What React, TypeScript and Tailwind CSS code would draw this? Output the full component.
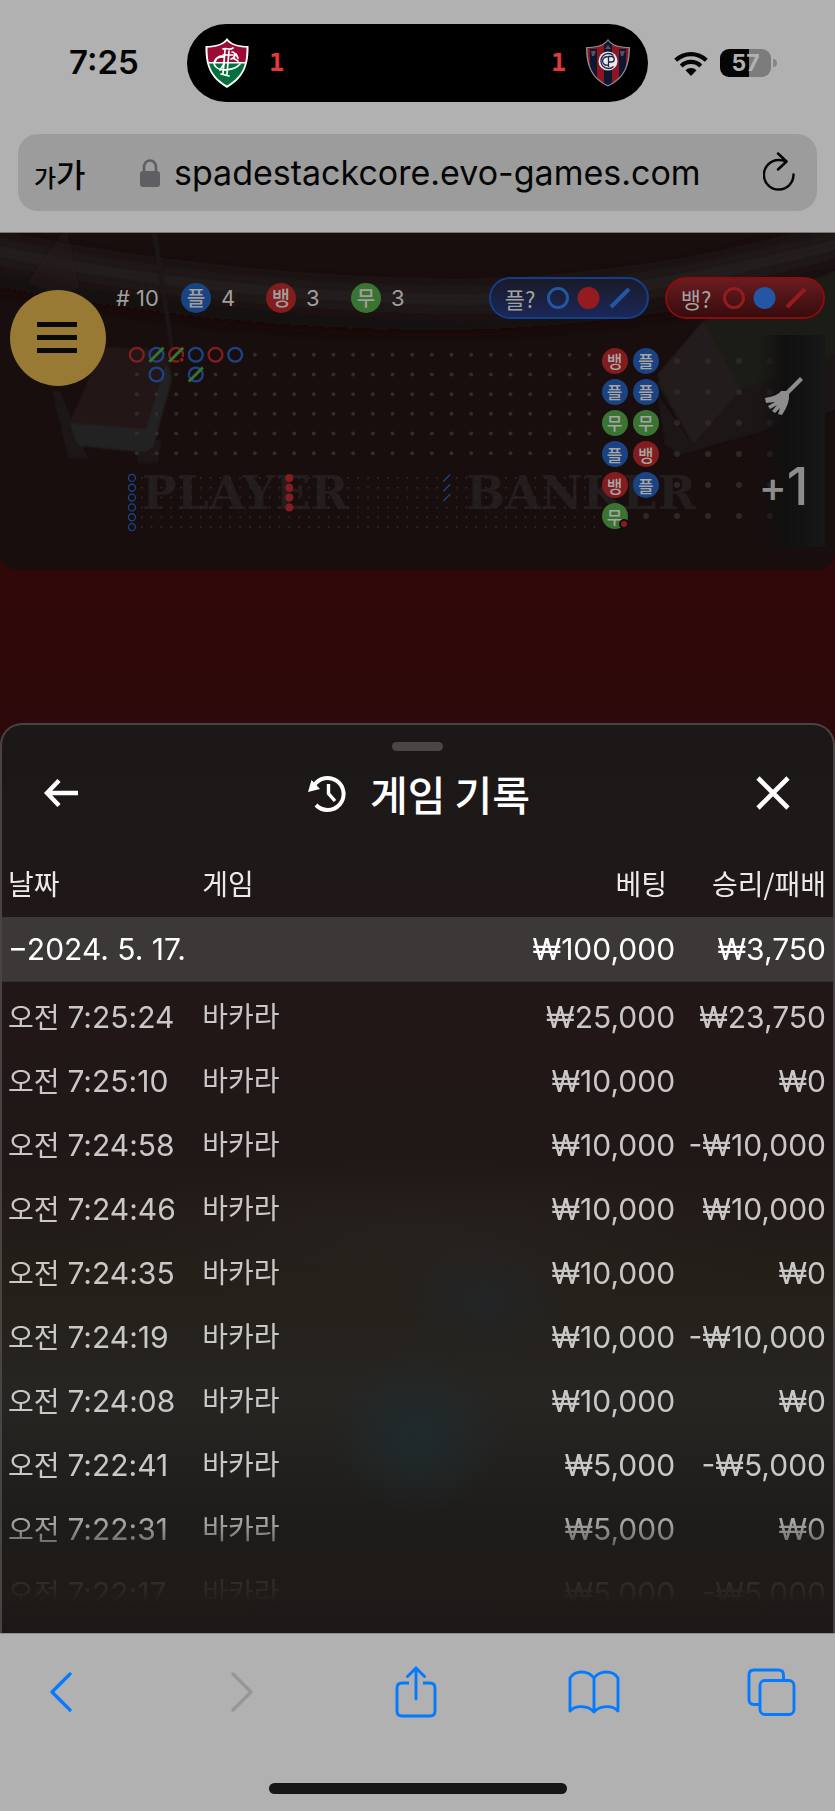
import React from "react";

type Side = "p" | "b" | "t";

const sideLabel: Record<Side, string> = { p: "플", b: "뱅", t: "무" };
const sideBg: Record<Side, string> = {
  p: "bg-[#1a4383]",
  b: "bg-[#831c1e]",
  t: "bg-[#3a7433]",
};

const BLUE = "#1b4488";
const RED = "#841d20";
const GREEN = "#39742f";

const kr = "font-['Noto_Sans_CJK_KR',sans-serif]";

const beads: (Side | null)[][] = [
  ["b", "p", null, null, null, null, null],
  ["p", "p", null, null, null, null, null],
  ["t", "t", null, null, null, null, null],
  ["p", "b", null, null, null, null, null],
  ["b", "p", null, null, null, null, null],
  ["t", null, null, null, null, null, null],
];

const history = [
  ["7:25:24", "₩25,000", "₩23,750"],
  ["7:25:10", "₩10,000", "₩0"],
  ["7:24:58", "₩10,000", "-₩10,000"],
  ["7:24:46", "₩10,000", "₩10,000"],
  ["7:24:35", "₩10,000", "₩0"],
  ["7:24:19", "₩10,000", "-₩10,000"],
  ["7:24:08", "₩10,000", "₩0"],
  ["7:22:41", "₩5,000", "-₩5,000"],
  ["7:22:31", "₩5,000", "₩0"],
  ["7:22:17", "₩5,000", "-₩5,000"],
];

function HomeCrest() {
  return (
    <svg viewBox="0 0 44 50" className="h-[50px] w-11" role="img" aria-label="Home team">
      <defs>
        <clipPath id="homeShield">
          <path d="M22 3C18 7 11 9.500 2.500 9.500C2.500 27 6 38 22 47.500C38 38 41.500 27 41.500 9.500C33 9.500 26 7 22 3Z" />
        </clipPath>
      </defs>
      <path d="M22 0C18 6 11 8 0.500 8C0 27 5 40 22 50C39 40 44 27 43.500 8C33 8 26 6 22 0Z" fill="#fff" />
      <g clipPath="url(#homeShield)">
        <rect width="44" height="25" fill="#9b0b34" />
        <rect y="25" width="44" height="25" fill="#04703f" />
        <rect y="24" width="44" height="1.500" fill="#fff" />
      </g>
      <g fill="none" stroke="#fff" strokeWidth="1.700" strokeLinecap="round">
        <path d="M18 11C21 9 24 13 28 10M20 12L18 36M24 13L22 36M18 17H28M16 36L24 38" />
        <path d="M19 19C10 18 7 25 11 29C16 34 30 32 35 26" />
        <path d="M10 24C12 18 16 17 19 19" />
        <path d="M27 14C31 14 31 20 26 21M28 20L33 23M31 16L33 20M15 32L19 26" />
      </g>
    </svg>
  );
}

function AwayCrest() {
  return (
    <svg viewBox="0 0 44 48" className="h-12 w-11" role="img" aria-label="Away team">
      <defs>
        <clipPath id="awayShield">
          <path d="M22 2C18 7 11 9 1.500 9C1.500 27 7 39 22 46C37 39 42.500 27 42.500 9C33 9 26 7 22 2Z" />
        </clipPath>
      </defs>
      <path d="M22 0C18 6 11 8 0 8C0 28 6 40 22 47.500C38 40 44 28 44 8C33 8 26 6 22 0Z" fill="#8a8a93" />
      <g clipPath="url(#awayShield)">
        <rect width="44" height="48" fill="#8c1620" />
        <path d="M4 10H11V48H4ZM18 0H26V48H18ZM33 10H40V48H33Z" fill="#0f1730" />
        <path d="M5 12H10L8 17H6ZM34 12H39L37 17H35ZM19 10L22 6L25 10Z" fill="#4b566c" />
      </g>
      <circle cx="22" cy="22" r="9.500" fill="#e8e9ee" />
      <g fill="none" stroke="#1d2340" strokeWidth="1.300">
        <path d="M27.500 16.500A7.500 7.500 0 1 0 27.500 27.500" />
        <path d="M22 18A4.200 4.200 0 1 0 22 26M22.500 28V17.500H25.500A2.700 2.700 0 0 1 25.500 23H22.500" />
      </g>
    </svg>
  );
}

function Wifi() {
  return (
    <svg viewBox="0 0 34 25" className="h-[25px] w-[34px]" role="img" aria-label="Wi-Fi">
      <g fill="none" stroke="#050505" strokeWidth="4.200">
        <path d="M1.700 9.300A22 22 0 0 1 32.300 9.300" />
        <path d="M7.200 14.900A14 14 0 0 1 26.800 14.900" />
      </g>
      <path d="M11.500 19.300A8 8 0 0 1 22.500 19.300L17 25Z" fill="#050505" />
    </svg>
  );
}

function StatusBar() {
  return (
    <div className="flex h-[126px] items-center justify-between pr-[58px] pl-[69px]">
      <time className="w-[118px] shrink-0 text-[33px] font-semibold text-[#050505]">7:25</time>
      <div className="flex h-[78px] flex-1 items-center rounded-full bg-black px-[18px]">
        <HomeCrest />
        <span className="ml-5 font-['DejaVu_Sans_Mono',monospace] text-[25px] font-bold text-[#e23a36]">1</span>
        <span className="mr-5 ml-auto font-['DejaVu_Sans_Mono',monospace] text-[25px] font-bold text-[#e23a36]">1</span>
        <AwayCrest />
      </div>
      <div className="ml-[26px] flex shrink-0 items-center gap-3">
        <Wifi />
        <div className="flex items-center gap-0.5">
          <div className="flex h-7 w-[51px] items-center justify-center rounded-[9px] bg-linear-to-r from-[#050505] from-57% to-[#7c7c7c] to-57% text-[23px] font-bold text-[#b1b1b1]">
            57
          </div>
          <div className="h-2 w-1 rounded-r-full bg-[#868686]" />
        </div>
      </div>
    </div>
  );
}

function AddressBar() {
  return (
    <div className="mx-[18px] mt-2 mb-[21px] flex h-[77px] items-center rounded-[20px] bg-[#9c9c9c] pr-[22px] pl-4 text-[#050505]">
      <button type="button" aria-label="페이지 설정" className={`flex items-baseline leading-none font-medium ${kr}`}>
        <span className="text-[24px]">가</span>
        <span className="text-[32px]">가</span>
      </button>
      <div className="flex flex-1 items-center justify-center gap-[14px] pr-2">
        <svg viewBox="0 0 20 28" className="h-7 w-5" aria-hidden="true">
          <rect y="12" width="20" height="16" rx="3" fill="#5f5f63" />
          <path d="M4 13V8A6 6.500 0 0 1 16 8V13" fill="none" stroke="#5f5f63" strokeWidth="2.600" />
        </svg>
        <span className="text-[34px] leading-none">spadestackcore.evo-games.com</span>
      </div>
      <button type="button" aria-label="새로고침">
        <svg viewBox="0 0 32 42" className="h-[42px] w-8" fill="none" stroke="#050505" strokeWidth="2.500" strokeLinecap="round" strokeLinejoin="round">
          <path d="M23 9.500Q19.500 8 15.700 8A14.800 14.800 0 1 0 30.500 22.500" />
          <path d="M15 1.500L23.500 9.500L15 17.500" />
        </svg>
      </button>
    </div>
  );
}

function Counter({ side, count }: { side: Side; count: number }) {
  return (
    <div className="flex w-[85px] items-center gap-2.5">
      <span className={`flex size-[30px] items-center justify-center rounded-full text-[20px] leading-none font-medium ${kr} ${sideBg[side]}`}>
        {sideLabel[side]}
      </span>
      <span>{count}</span>
    </div>
  );
}

function Prediction({ side }: { side: "p" | "b" }) {
  const own = side === "p" ? "#2356a5" : "#951b1f";
  const other = side === "p" ? "#951b1f" : "#2356a5";
  const look =
    side === "p"
      ? "border-[#123f8c] from-[#1a1a27] to-[#1a2759]"
      : "border-[#8d0a0d] from-[#6b1c1f] to-[#360c0d]";
  return (
    <button type="button" className={`flex h-[42px] w-40 items-center justify-center gap-3 rounded-full border-2 bg-linear-to-b pr-0.5 text-[#a3a09f] ${look}`}>
      <span className={`text-[22px] leading-none ${kr}`}>{sideLabel[side]}?</span>
      <svg viewBox="0 0 84 22" className="h-[22px] w-[84px]" aria-hidden="true">
        <circle cx="11" cy="11" r="9.500" fill="none" stroke={own} strokeWidth="3" />
        <circle cx="41.500" cy="11" r="11" fill={other} />
        <path d="M64 20L82 2" stroke={own} strokeWidth="4" />
      </svg>
    </button>
  );
}

function Roads() {
  const cell = (n: number) => 9.8 + n * 19.67;
  const small = (n: number) => 4.9 + n * 9.84;
  const big: [number, number, string, boolean][] = [
    [0, 0, RED, false],
    [1, 0, BLUE, true],
    [2, 0, RED, true],
    [3, 0, BLUE, false],
    [4, 0, RED, false],
    [5, 0, BLUE, false],
    [1, 1, BLUE, false],
    [3, 1, BLUE, true],
  ];
  const filled = new Set(big.map(([c, r]) => `${c}-${r}`));
  return (
    <svg viewBox="0 0 472 187" className="min-w-0 flex-[472]" role="img" aria-label="Roads">
      {Array.from({ length: 144 }, (_, i) => [i % 24, Math.floor(i / 24)])
        .filter(([c, r]) => !filled.has(`${c}-${r}`))
        .map(([c, r]) => (
          <circle key={`${c}-${r}`} cx={cell(c)} cy={cell(r)} r="2" fill="#352b2a" />
        ))}
      {big.map(([c, r, color, tie]) => (
        <g key={`${c}-${r}`} fill="none">
          <circle cx={cell(c)} cy={cell(r)} r="6.900" stroke={color} strokeWidth="2.300" />
          {tie && <path d={`M${cell(c) - 7} ${cell(r) + 7}l14 -14`} stroke={GREEN} strokeWidth="3" />}
        </g>
      ))}
      <circle cx={cell(2) + 5.5} cy={cell(0) + 5} r="3" fill="#170d0d" />
      <circle cx={cell(2) + 5.5} cy={cell(0) + 5} r="2" fill={RED} />
      {Array.from({ length: 288 }, (_, i) => [i % 48, Math.floor(i / 48)])
        .filter(([c, r]) => !(c === 0 || (c === 16 && r < 4) || (c === 32 && r < 3)))
        .map(([c, r]) => (
          <circle key={`s${c}-${r}`} cx={small(c)} cy={128 + small(r)} r="1" fill="#30292a" />
        ))}
      {[0, 1, 2, 3, 4, 5].map((r) => (
        <circle key={r} cx={small(0)} cy={128 + small(r)} r="3.500" fill="none" stroke={BLUE} strokeWidth="1.300" />
      ))}
      {[0, 1, 2, 3].map((r) => (
        <circle key={r} cx={small(16)} cy={128 + small(r)} r="4" fill={RED} />
      ))}
      {[0, 1, 2].map((r) => (
        <path key={r} d={`M${small(32) - 3.5} ${128 + small(r) + 3.5}l7 -7`} stroke={BLUE} strokeWidth="1.400" />
      ))}
    </svg>
  );
}

function BeadPlate() {
  return (
    <div className="grid h-[187px] min-w-0 flex-[218] grid-cols-7 grid-rows-6 place-items-center">
      {beads.flatMap((row, r) =>
        row.map((side, c) =>
          side ? (
            <span key={`${r}-${c}`} className={`relative flex size-[26px] items-center justify-center rounded-full text-[17px] leading-none font-medium text-[#a8a5a4] ${kr} ${sideBg[side]}`}>
              {sideLabel[side]}
              {r === 5 && <i className="absolute -right-px bottom-0 size-[10px] rounded-full border-2 border-[#170d0d] bg-[#841d20]" />}
            </span>
          ) : (
            <i key={`${r}-${c}`} className="size-1.5 rounded-full bg-[#2f2727]" />
          ),
        ),
      )}
    </div>
  );
}

function TableScene() {
  return (
    <svg viewBox="0 0 835 337" preserveAspectRatio="xMidYMid slice" className="absolute inset-0 size-full" aria-hidden="true">
      <defs>
        <filter id="soft" x="-10%" y="-50%" width="120%" height="200%">
          <feGaussianBlur stdDeviation="8" />
        </filter>
        <filter id="edge">
          <feGaussianBlur stdDeviation="1" />
        </filter>
      </defs>
      <g filter="url(#soft)" fill="none">
        <path d="M-20 14C140 50 300 64 440 66S700 48 860 5" stroke="#221e1b" strokeWidth="26" />
        <path d="M-20 46C180 82 300 92 430 92S700 76 860 34" stroke="#151010" strokeWidth="12" />
      </g>
      <g filter="url(#edge)">
        <path d="M62 0H68L79 55L60 62L27 50Z" fill="#211c1b" opacity="0.4" />
        <path d="M152 0H157L174 116H170Z" fill="#1f1919" />
        <path d="M52 158H60L88 225H68Z" fill="#1b1415" />
        <path d="M136 214L162 205L158 230H138Z" fill="#1c1515" />
        <path d="M102 114L165 117L172 140L148 198L70 190Z" fill="#221818" />
        <path d="M70 190L146 196L166 130L172 145L154 212Q150 220 140 219L80 213Q74 210 70 190Z" fill="#242020" />
        <path d="M703 88L840 36V170L735 200L693 212L657 150Z" fill="#1e1a19" />
        <path d="M741 157L840 120V176L680 222L665 212L657 160L693 212Z" fill="#1a1313" />
        <path d="M703 88L741 157L693 212L657 142Z" fill="#241a1a" />
      </g>
      <g fill="#231d1d" fontFamily="DejaVu Serif, serif" fontWeight="700" fontSize="46">
        <text x="142" y="276">PLAYER</text>
        <text x="466" y="276">BANKER</text>
      </g>
    </svg>
  );
}

function Scoreboard() {
  return (
    <section className="relative flex min-h-[337px] flex-col overflow-hidden rounded-b-[18px] bg-[#190e0e] pt-11 text-[22px] text-[#a19e9d]">
      <TableScene />
      <div className="relative flex items-center pr-2.5 pl-[116px]">
        <span className="w-[65px]"># 10</span>
        <Counter side="p" count={4} />
        <Counter side="b" count={3} />
        <Counter side="t" count={3} />
        <div className="ml-auto flex gap-4">
          <Prediction side="p" />
          <Prediction side="b" />
        </div>
      </div>
      <div className="relative mt-[26px] flex pr-[18px] pl-[127px]">
        <Roads />
        <BeadPlate />
      </div>
      <div className="absolute top-[102px] right-2.5 flex h-[212px] w-[67px] flex-col items-center bg-linear-to-r from-transparent via-[#111010] via-40% to-[#161717] pt-[42px] pr-4 text-[#8d8d8d]">
        <button type="button" aria-label="지우기">
          <svg viewBox="0 0 40 38" className="h-[38px] w-10" fill="#8d8d8d">
            <path d="M36 0L39 3L25 17Q26 26 18 38L14 37L16 31L11 36L8 34L13 28L6 32L4 29L11 25L2 26L1 21Q14 19 17 14L22 14Z" />
          </svg>
        </button>
        <span className="mt-[46px] flex items-center leading-none font-medium">
          <span className="text-[42px]">+</span>
          <span className="text-[52px]">1</span>
        </span>
      </div>
      <button type="button" aria-label="메뉴" className="absolute top-[57px] left-2.5 flex size-24 flex-col items-center justify-center gap-2 rounded-full bg-[#987a34] pr-0.5 pb-0.5">
        <i className="h-[5px] w-10 bg-[#090907]" />
        <i className="h-[5px] w-10 bg-[#090907]" />
        <i className="h-[5px] w-10 bg-[#090907]" />
      </button>
    </section>
  );
}

function HistorySheet() {
  return (
    <section
      aria-label="게임 기록"
      className="flex flex-1 flex-col overflow-hidden rounded-t-[22px] border-2 border-b-0 border-[#494343] bg-[#1e1a1a] bg-[radial-gradient(ellipse_90px_80px_at_50%_78%,#1f2a2d,transparent),radial-gradient(ellipse_90px_60px_at_58%_63%,#222426,transparent),radial-gradient(ellipse_360px_80px_at_50%_57%,#27211d,transparent),linear-gradient(#1c1818,#1f1818_15%,#211717_30%,#201717_48%,#242019_62%,#272522_74%,#1d1c1a_88%,#201a18_96%,#1b1817)]"
    >
      <div className="mx-auto mt-[17px] h-[9px] w-[51px] shrink-0 rounded-full bg-[#4b4646]" />
      <header className="flex h-[86px] shrink-0 items-center justify-between pr-[43px] pb-0.5 pl-[42px] text-white">
        <button type="button" aria-label="뒤로">
          <svg viewBox="0 0 34 28" className="h-7 w-[34px]" fill="none" stroke="currentColor" strokeWidth="4.400">
            <path d="M34 14H4M15 1.500L3 14L15 26.500" />
          </svg>
        </button>
        <h1 className={`ml-1 flex items-center gap-6 text-[41px] leading-none font-medium ${kr}`}>
          <svg viewBox="0 0 38 37" className="h-[37px] w-[38px]" aria-hidden="true">
            <g fill="none" stroke="currentColor">
              <path d="M6 10.500A16 16 0 1 1 8 30" strokeWidth="4" />
              <path d="M20.500 9V18.500L27 26" strokeWidth="3.400" />
            </g>
            <path d="M3.500 5L0 17L12 14Z" fill="currentColor" />
          </svg>
          게임 기록
        </h1>
        <button type="button" aria-label="닫기">
          <svg viewBox="0 0 34 34" className="size-[34px]" stroke="currentColor" strokeWidth="4.600">
            <path d="M2 2L32 32M32 2L2 32" />
          </svg>
        </button>
      </header>
      <div className="[mask-image:linear-gradient(#000_665px,#000b_690px,#0007_706px,#0002_735px,#0001_755px,transparent_766px)]">
        <table className="w-full table-fixed border-collapse text-[30px] leading-none text-[#cac8c7]">
          <thead>
            <tr className={`h-20 text-[28px] text-[#ebe9e9] ${kr}`}>
              <th scope="col" className="w-[23%] pt-3 pl-1.5 text-left font-normal">날짜</th>
              <th scope="col" className="w-[23%] pt-3 pl-[9px] text-left font-normal">게임</th>
              <th scope="col" className="pt-3 pr-2 text-right font-normal">베팅</th>
              <th scope="col" className="w-[19%] pt-3 pr-[7px] text-right font-normal">승리/패배</th>
            </tr>
          </thead>
          <tbody>
            <tr className="h-16 border-b border-[#353030] bg-[#3d3838] text-white">
              <th scope="row" colSpan={2} className="pl-1.5 text-left font-normal">−2024. 5. 17.</th>
              <td className="text-right">₩100,000</td>
              <td className="pr-[7px] text-right">₩3,750</td>
            </tr>
            <tr className="h-1" aria-hidden="true" />
            {history.map(([time, bet, result]) => (
              <tr key={time} className="h-16 whitespace-nowrap">
                <td className="pl-1.5">
                  <span className="text-[28px]">오전 </span>
                  {time}
                </td>
                <td className="pl-[9px] text-[28px]">바카라</td>
                <td className="text-right">{bet}</td>
                <td className="pr-[7px] text-right">{result}</td>
              </tr>
            ))}
          </tbody>
        </table>
      </div>
    </section>
  );
}

function Toolbar() {
  return (
    <footer className="flex h-[178px] shrink-0 flex-col items-center border-t border-[#8f8f8f] bg-[#b1b1b1]">
      <nav className="flex w-full items-center justify-between pt-8 pr-9 pl-[33px]" aria-label="브라우저">
        <button type="button" aria-label="이전" className="flex w-14 justify-center">
          <svg viewBox="0 0 22 40" className="h-10 w-[22px]" fill="none" stroke="#047bff" strokeWidth="3.200" strokeLinecap="round" strokeLinejoin="round">
            <path d="M20 2L2 20L20 38" />
          </svg>
        </button>
        <button type="button" aria-label="다음" disabled className="flex w-14 justify-center pl-1.5">
          <svg viewBox="0 0 22 40" className="h-10 w-[22px]" fill="none" stroke="#969696" strokeWidth="3.200" strokeLinecap="round" strokeLinejoin="round">
            <path d="M2 2L20 20L2 38" />
          </svg>
        </button>
        <button type="button" aria-label="공유" className="flex w-14 justify-center">
          <svg viewBox="0 0 42 52" className="h-[52px] w-[42px]" fill="none" stroke="#047bff" strokeWidth="2.900" strokeLinecap="round" strokeLinejoin="round">
            <path d="M14 17H7Q2 17 2 22V45Q2 50 7 50H35Q40 50 40 45V22Q40 17 35 17H28" strokeLinecap="butt" />
            <path d="M21 33V2M12.500 10.500L21 2L29.500 10.500" />
          </svg>
        </button>
        <button type="button" aria-label="책갈피" className="flex w-14 justify-center">
          <svg viewBox="0 0 52 44" className="h-11 w-[52px]" fill="none" stroke="#047bff" strokeWidth="2.900" strokeLinecap="round" strokeLinejoin="round">
            <path d="M26 8C20 0 7 0 2 8V41C7 35 20 35 26 42C32 35 45 35 50 41V8C45 0 32 0 26 8ZM26 8V42" />
          </svg>
        </button>
        <button type="button" aria-label="탭" className="flex w-14 justify-center">
          <svg viewBox="0 0 49 48" className="h-12 w-[49px]" fill="none" stroke="#047bff" strokeWidth="2.900">
            <rect x="13" y="12.500" width="34" height="34" rx="5" />
            <path d="M36.500 12V7Q36.500 2 31.500 2H7Q2 2 2 7V31.500Q2 36.500 7 36.500H13" />
          </svg>
        </button>
      </nav>
      <div className="mt-auto mb-[17px] h-[11px] w-[298px] rounded-full bg-[#161616]" />
    </footer>
  );
}

export default function App() {
  return (
    <main className="flex min-h-screen flex-col bg-[#2f090a] font-['Inter','Noto_Sans_CJK_KR',sans-serif]">
      <header className="border-b border-[#777] bg-[#b1b1b1]">
        <StatusBar />
        <AddressBar />
      </header>
      <Scoreboard />
      <div className="h-[153px] shrink-0 bg-linear-to-b from-[#310809] to-[#2c090a]" />
      <HistorySheet />
      <Toolbar />
    </main>
  );
}
